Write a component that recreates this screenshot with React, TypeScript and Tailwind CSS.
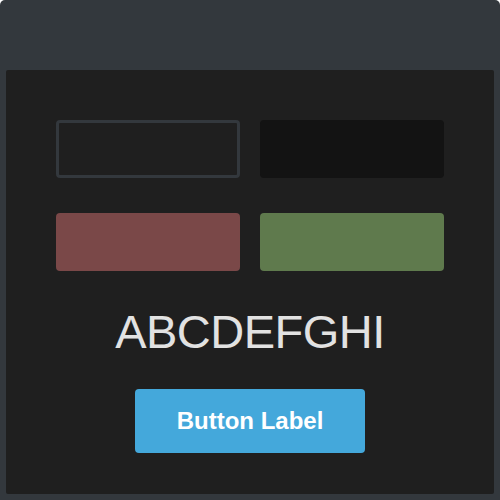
export default function App() {
  return (
    <div className="w-[500px] h-[500px] bg-white">
      <div className="w-full h-full bg-[#33383d] rounded-t-[5px] pt-[70px] px-[6px] pb-[6px] flex">
        <div className="flex-1 bg-[#1f1f1f] rounded-[2px] flex flex-col items-center pt-[50px]" style={{ fontFamily: '"Liberation Sans", Arial, sans-serif' }}>
          <div className="grid grid-cols-[184px_184px] gap-x-[20px] gap-y-[35px]">
            <div className="h-[58px] border-[3px] border-[#33383d] rounded-[4px]" />
            <div className="h-[58px] bg-[#131313] rounded-[4px]" />
            <div className="h-[58px] bg-[#7a4848] rounded-[4px]" />
            <div className="h-[58px] bg-[#5f7a4d] rounded-[4px]" />
          </div>
          <div className="mt-[33px] text-[47px] leading-[56px] text-[#e2e2e2] tracking-[-0.5px]">ABCDEFGHI</div>
          <button className="mt-[29px] w-[230px] h-[64px] bg-[#44a8db] rounded-[4px] text-white font-bold text-[24px]">Button Label</button>
        </div>
      </div>
    </div>
  );
}
